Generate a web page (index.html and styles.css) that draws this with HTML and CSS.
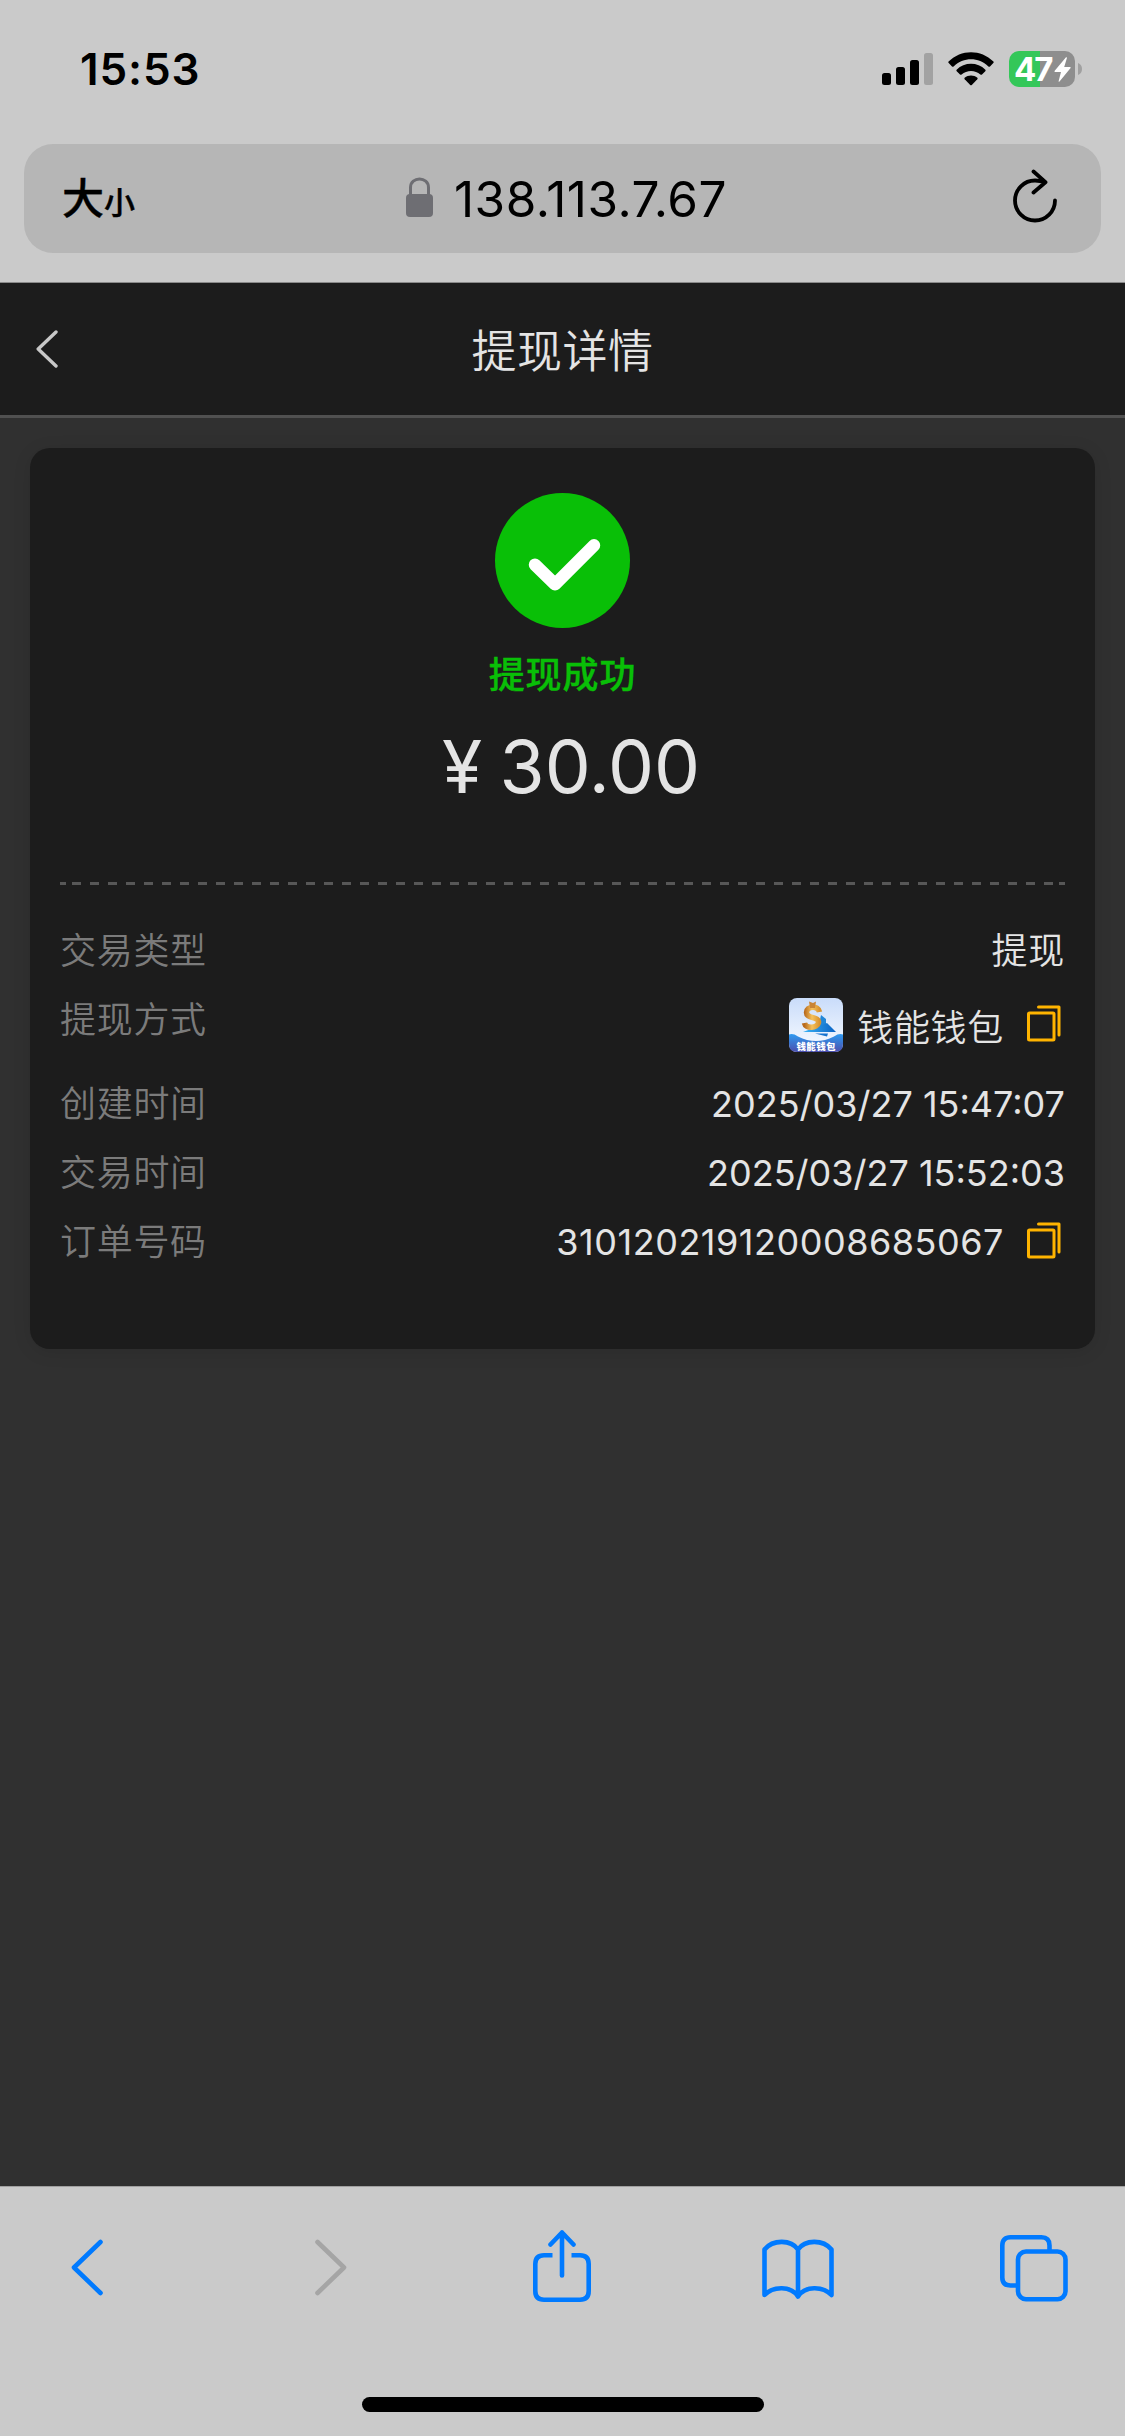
FILE: index.html
```html
<!DOCTYPE html>
<html lang="zh-CN">
<head>
<meta charset="utf-8">
<title>提现详情</title>
<link rel="stylesheet" href="styles.css">
</head>
<body>
<div class="screen">
  <div class="status-bar">
    <span class="clock">15:53</span>
    <div class="status-icons">
      <svg class="signal" width="51" height="32" viewBox="0 0 51 32">
        <rect x="0" y="20" width="9" height="12" rx="2.5"/>
        <rect x="14" y="14" width="9" height="18" rx="2.5"/>
        <rect x="28" y="7" width="9" height="25" rx="2.5"/>
        <rect x="42" y="0" width="9" height="32" rx="2.5" fill="#a2a2a2"/>
      </svg>
      <svg class="wifi" width="46" height="34" viewBox="0 0 46 34">
        <path d="M.6 9.6C13-3 33-3 45.400 9.600Q46 10.400 45.300 11.100L42 14.400Q41.200 15 40.400 14.400C30.500 4.700 15.500 4.700 5.600 14.400Q4.800 15 4 14.400L.7 11.100Q0 10.400 .6 9.600Z"/>
        <path d="M8.600 17.700C16.500 9.900 29.500 9.900 37.400 17.700Q38 18.500 37.300 19.200L34 22.500Q33.200 23.100 32.400 22.500C27.200 17.800 18.800 17.800 13.600 22.500Q12.800 23.100 12 22.500L8.700 19.200Q8 18.500 8.600 17.700Z"/>
        <path d="M16.600 25.800C20.200 22.700 25.800 22.700 29.400 25.800Q30 26.500 29.300 27.300L23.800 32.900Q23 33.600 22.200 32.900L16.700 27.300Q16 26.500 16.600 25.800Z"/>
      </svg>
      <div class="battery">
        <span class="battery-level">47</span>
        <svg width="17" height="25" viewBox="0 0 17 25"><path fill="#fff" d="M12 .3 .5 14Q.2 14.900 1.200 15H7L4.600 24.200Q4.700 25 5.500 24.600L16.600 11Q16.900 10.200 16 10H10.200L13 .8Q12.800 0 12 .3Z"/></svg>
      </div>
      <svg class="battery-nub" width="4" height="12" viewBox="0 0 4 12"><path fill="#a0a0a0" d="M0 0Q4 1.500 4 6T0 12Z"/></svg>
    </div>
  </div>

  <div class="address-bar">
    <div class="text-size"><span class="size-big">大</span><span class="size-small">小</span></div>
    <div class="site">
      <svg class="lock" width="27" height="40" viewBox="0 0 27 40"><rect y="17" width="27" height="23" rx="4" fill="#6e6e73"/><path d="M4.500 18V10.500C4.500-1 22.500-1 22.500 10.500V18" fill="none" stroke="#6e6e73" stroke-width="3"/></svg>
      <span class="url">138.113.7.67</span>
    </div>
    <svg class="reload" width="46" height="56" viewBox="0 0 46 56" fill="none" stroke="#000" stroke-width="3.800" stroke-linecap="round" stroke-linejoin="round"><path d="M43 32.500A20 20 0 1 1 23 12.500Q28 12.500 33.500 14.200M21.500 3.500 33.500 14.200 21.500 24.500"/></svg>
  </div>

  <header class="page-header">
    <svg class="back" width="22" height="38" viewBox="0 0 22 38" fill="none" stroke="#c8c8c8" stroke-width="3.400" stroke-linecap="round" stroke-linejoin="round"><path d="M20 2 2.200 19 20 36"/></svg>
    <h1 class="page-title">提现详情</h1>
  </header>

  <main class="content">
    <section class="card">
      <div class="result">
        <svg width="135" height="135" viewBox="0 0 135 135"><circle cx="67.500" cy="67.500" r="67.500" fill="#09bf07"/><path d="M40 71.700 60 91.300 99 52.300" fill="none" stroke="#fff" stroke-width="12.500" stroke-linecap="round" stroke-linejoin="round"/></svg>
        <div class="result-text">提现成功</div>
        <div class="amount">¥ 30.00</div>
      </div>
      <div class="divider"></div>
      <dl class="details">
        <div class="row"><dt>交易类型</dt><dd class="cjk">提现</dd></div>
        <div class="row row-method"><dt>提现方式</dt><dd class="cjk">
          <svg class="wallet" width="54" height="54" viewBox="0 0 54 54">
            <defs>
              <linearGradient id="sky" x2="0" y2="1"><stop stop-color="#c9dcfa"/><stop offset="1" stop-color="#fafcff"/></linearGradient>
              <linearGradient id="wave" x2="0" y2="1"><stop stop-color="#2e9af0"/><stop offset="1" stop-color="#4c4fae"/></linearGradient>
              <linearGradient id="gold"><stop stop-color="#b86a1d"/><stop offset=".5" stop-color="#f5c15c"/><stop offset="1" stop-color="#d9932f"/></linearGradient>
              <linearGradient id="plane"><stop stop-color="#39b2f5"/><stop offset="1" stop-color="#0b62c4"/></linearGradient>
            </defs>
            <rect width="54" height="54" rx="8" fill="url(#sky)"/>
            <path d="M32 17 37 21V26L29 31Z" fill="#2287d8"/>
            <path d="M14 34 38 25 47 34Z" fill="url(#plane)"/>
            <path d="M26 35.500H39L38 38.500Z" fill="#1673cf"/>
            <path d="M30.500 14C29 7 17.500 8 17.500 14.500S30.500 18.500 29.500 24.500 16.500 31 15.500 25" fill="none" stroke="url(#gold)" stroke-width="5.500"/>
            <path d="M20 3.500 24 5 27 3.500 26 10H21Z" fill="#c98436"/>
            <path d="M0 36.500Q4 35 9 38.500 27 47.500 45 38.500 50 35 54 36.500V46Q54 54 46 54H8Q0 54 0 46Z" fill="url(#wave)"/>
            <text class="wallet-label" x="7.500" y="51.600" textLength="39">钱能钱包</text>
          </svg>
          <span>钱能钱包</span>
          <svg class="copy" width="34" height="37" viewBox="0 0 34 37" fill="none" stroke="#ffb400" stroke-width="3" stroke-linejoin="round" stroke-linecap="round"><rect x="1.500" y="8" width="25.500" height="27" rx="1"/><path d="M11.500 2H32V30"/></svg>
        </dd></div>
        <div class="row"><dt>创建时间</dt><dd class="digits">2025/03/27 15:47:07</dd></div>
        <div class="row"><dt>交易时间</dt><dd class="digits">2025/03/27 15:52:03</dd></div>
        <div class="row"><dt>订单号码</dt><dd class="digits">
          <span class="order">310120219120008685067</span>
          <svg class="copy" width="34" height="37" viewBox="0 0 34 37" fill="none" stroke="#ffb400" stroke-width="3" stroke-linejoin="round" stroke-linecap="round"><rect x="1.500" y="8" width="25.500" height="27" rx="1"/><path d="M11.500 2H32V30"/></svg>
        </dd></div>
      </dl>
    </section>
  </main>

  <nav class="toolbar">
    <div class="toolbar-icons">
      <svg class="previous" width="32" height="57" viewBox="0 0 32 57"><path d="M29.500 3 3 28.500 29.500 54"/></svg>
      <svg class="forward" width="32" height="57" viewBox="0 0 32 57"><path d="M2.500 3 29 28.500 2.500 54"/></svg>
      <svg class="share" width="58" height="72" viewBox="0 0 58 72"><path class="butt" d="M19.500 25.200H11Q2.300 25.200 2.300 34V61Q2.300 69.700 11 69.700H47Q55.700 69.700 55.700 61V34Q55.700 25.200 47 25.200H38.500"/><path d="M29 2.500V45.500M17.500 14.500 29 2.500 40.500 14.500"/></svg>
      <svg class="book" width="72" height="60" viewBox="0 0 72 60"><path d="M36 10.500C29 .5 11 .2 2.500 10.500V56C11 47 29 46.500 36 57.500 43 46.500 61 47 69.500 56V10.500C61 .2 43 .5 36 10.500V57"/></svg>
      <svg class="tabs" width="68" height="67" viewBox="0 0 68 67"><path class="butt" d="M16 50.500H10.500Q2.300 50.500 2.300 42.500V10.500Q2.300 2.300 10.500 2.300H41.500Q49.500 2.300 49.500 10.500V16"/><rect x="18" y="16.500" width="47.500" height="47.700" rx="8"/></svg>
    </div>
    <div class="home-indicator"></div>
  </nav>
</div>
</body>
</html>
```
FILE: styles.css
```css
* { box-sizing: border-box; }
body, h1, dl, dd { margin: 0; }
body { background: #303030; }
svg { display: block; flex: none; }

.screen {
  width: 1125px;
  height: 2436px;
  display: flex;
  flex-direction: column;
  background: #cacaca;
  font-family: Inter, "Noto Sans CJK SC", sans-serif;
}

/* Browser chrome */
.status-bar {
  height: 144px;
  padding: 0 43px 6px 80px;
  display: flex;
  align-items: center;
  justify-content: space-between;
}
.clock {
  font-size: 44px;
  font-weight: 600;
  line-height: 60px;
  letter-spacing: 0.9px;
}
.status-icons { display: flex; align-items: center; }
.wifi { margin-left: 15px; }
.battery {
  width: 66px;
  height: 36px;
  margin-left: 15px;
  padding-left: 5px;
  display: flex;
  align-items: center;
  border-radius: 10px;
  background: linear-gradient(90deg, #34c759 31px, #8e8e8e 31px);
}
.battery-level {
  width: 40px;
  font-size: 33px;
  line-height: 36px;
  font-weight: 700;
  letter-spacing: -2px;
  color: #fff;
}
.battery-nub { margin-left: 3px; }

.address-bar {
  height: 109px;
  margin: 0 24px 29px;
  padding: 0 43px 0 38px;
  display: grid;
  grid-template-columns: 1fr auto 1fr;
  align-items: center;
  border-radius: 29px;
  background: #b6b6b6;
}
.text-size {
  display: flex;
  align-items: baseline;
  font-family: "Noto Sans CJK SC", sans-serif;
  font-weight: 500;
  line-height: 60px;
  -webkit-text-stroke: 0.4px #000;
}
.size-big { font-size: 42px; }
.size-small { font-size: 31px; }
.site {
  display: flex;
  align-items: center;
  gap: 21px;
  margin-left: 13px;
}
.lock { margin-bottom: 4px; }
.url {
  font-size: 49.5px;
  line-height: 60px;
  letter-spacing: 0.5px;
}
.reload { justify-self: end; margin-bottom: 5px; }

/* Page */
.page-header {
  height: 136px;
  padding: 0 36px;
  display: grid;
  grid-template-columns: 1fr auto 1fr;
  align-items: center;
  border-top: 1px solid #8a8a8a;
  border-bottom: 3px solid #505050;
  background: #1c1c1c;
}
.page-title {
  font-family: "Noto Sans CJK SC", sans-serif;
  font-size: 45px;
  font-weight: 350;
  line-height: 66px;
  letter-spacing: 0.5px;
  color: #e4e4e4;
}
.content {
  flex: 1;
  padding: 30px;
  background: #303030;
}
.card {
  height: 901px;
  padding: 45px 30px;
  border-radius: 20px;
  background: #1c1c1c;
  box-shadow: 0 3px 18px rgba(0, 0, 0, 0.1);
}
.result {
  height: 389px;
  display: flex;
  flex-direction: column;
  align-items: center;
}
.result-text {
  margin-top: 17px;
  font-family: "Noto Sans CJK SC", sans-serif;
  font-size: 36px;
  font-weight: 500;
  line-height: 54px;
  letter-spacing: 0.9px;
  color: #09bf07;
  -webkit-text-stroke: 0.4px #09bf07;
}
.amount {
  margin-top: 23px;
  padding-left: 17px;
  font-size: 73px;
  line-height: 90px;
  word-spacing: -3px;
  color: #e4e4e4;
}
.divider {
  height: 3px;
  background:
    linear-gradient(#575757, #575757) 0 0 / 6px 3px no-repeat,
    linear-gradient(#575757, #575757) 100% 0 / 6px 3px no-repeat,
    repeating-linear-gradient(90deg, #575757 0 9px, transparent 9px 18px) 12px 0 / 981px 3px no-repeat;
}
.details { padding-top: 36px; }
.row {
  height: 54px;
  margin-bottom: 15px;
  display: flex;
  justify-content: space-between;
  font-size: 36px;
  line-height: 54px;
}
.row-method { height: 69px; }
dt {
  font-family: "Noto Sans CJK SC", sans-serif;
  font-weight: 350;
  letter-spacing: 0.7px;
  color: #7b7b7b;
}
dd {
  display: flex;
  align-items: center;
  color: #e4e4e4;
}
.cjk {
  font-family: "Noto Sans CJK SC", sans-serif;
  font-weight: 350;
  letter-spacing: 0.7px;
}
.digits { padding-top: 5px; }
.order { letter-spacing: 0.52px; }
.row-method dd { height: 70px; }
.row-method dd span { margin-top: -1px; }
.wallet { margin-right: 14px; }
.wallet-label { font-size: 9.5px; font-weight: 900; letter-spacing: 0; fill: #fff; }
.copy { margin: 0 4px 3px 23px; }

/* Bottom toolbar */
.toolbar {
  height: 250px;
  border-top: 1px solid #a0a0a0;
  background: #cacaca;
}
.toolbar-icons {
  height: 210px;
  padding: 43px 0 0 71px;
  display: flex;
  align-items: flex-start;
  fill: none;
  stroke: #007aff;
  stroke-width: 4.6;
  stroke-linecap: round;
  stroke-linejoin: round;
}
.toolbar-icons .previous { margin-top: 9px; }
.toolbar-icons .forward { margin: 9px 0 0 212px; stroke: #a5a5a5; }
.toolbar-icons .share { margin-left: 186px; }
.toolbar-icons .book { margin: 9px 0 0 171px; }
.toolbar-icons .tabs { margin: 5px 0 0 166px; }
.toolbar-icons .butt { stroke-linecap: butt; }
.home-indicator {
  width: 402px;
  height: 15px;
  margin: 0 auto;
  border-radius: 8px;
  background: #000;
}
```
